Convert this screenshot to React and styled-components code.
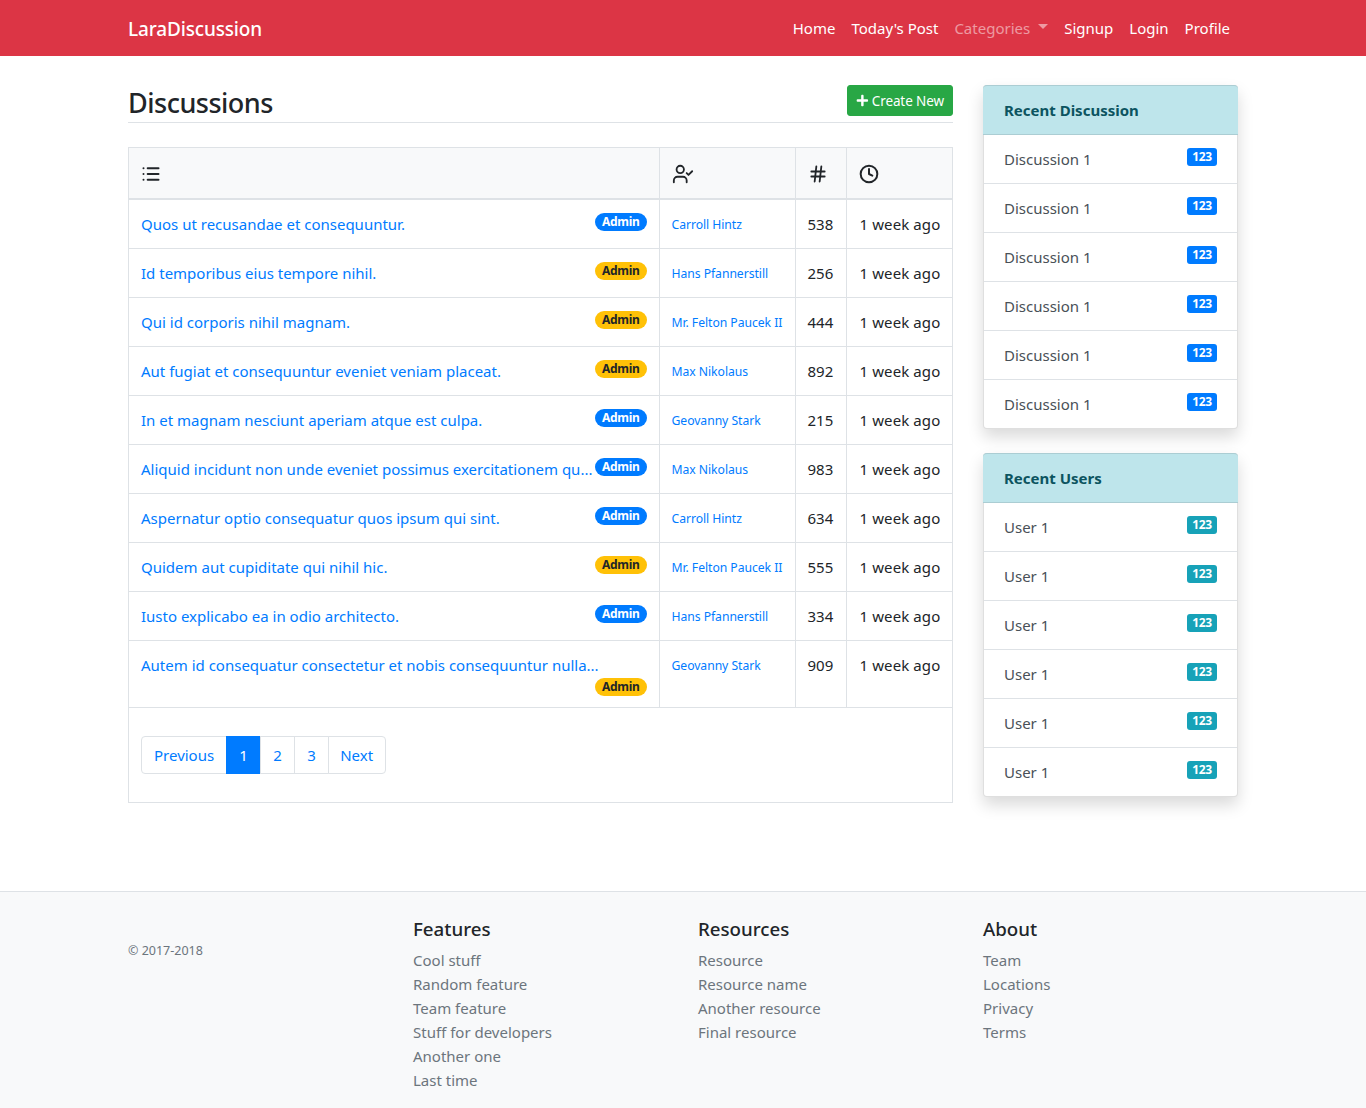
import React from "react";
import styled, { createGlobalStyle } from "styled-components";
import { List, UserCheck, Hash, Clock } from "lucide-react";
import { FaPlus } from "react-icons/fa";

const Global = createGlobalStyle`
  * { box-sizing: border-box; }
  html, body { margin: 0; padding: 0; background: #fff; }
  body { font-family: "Noto Sans", "Open Sans", sans-serif; font-size: 15px; line-height: 24px; color: #212529; }
  a { text-decoration: none; color: #007bff; }
`;

const Nav = styled.nav`
  height: 56px; background: #dc3545;
`;
const Container = styled.div`
  width: 1140px; margin: 0 auto; padding: 0 15px;
`;
const NavInner = styled(Container)`
  height: 56px; display: flex; align-items: center; justify-content: space-between;
`;
const Brand = styled.a`
  color: #fff; font-size: 19px; font-weight: 500; line-height: 30px; letter-spacing: -0.15px; padding-top: 2px;
`;
const NavLinks = styled.div`
  display: flex;
`;
const NavLink = styled.a`
  padding: 8px; color: ${p => (p.$muted ? "rgba(255,255,255,.5)" : "#fff")};
  display: flex; align-items: center;
`;
const Caret = styled.span`
  display: inline-block; margin-left: 8px; width: 0; height: 0;
  border-top: 5px solid rgba(255,255,255,.5); border-left: 5px solid transparent; border-right: 5px solid transparent;
  margin-top: -3px;
`;
const Layout = styled(Container)`
  display: flex; gap: 30px; padding-top: 29px; padding-bottom: 88px; align-items: flex-start;
`;
const MainCol = styled.main`
  width: 825px; flex: none;
`;
const Side = styled.aside`
  width: 255px; flex: none; display: flex; flex-direction: column; gap: 24px;
`;
const PageHead = styled.div`
  height: 38px; border-bottom: 1px solid #dee2e6; display: flex; justify-content: space-between; align-items: flex-start; margin-bottom: 24px;
`;
const Title = styled.h2`
  margin: 0; font-size: 27px; line-height: 36px; font-weight: 500; color: #212529; letter-spacing: -0.5px;
`;
const CreateBtn = styled.a`
  display: flex; align-items: center; gap: 3px; height: 31px; width: 106px; padding: 0 8px; background: #28a745; color: #fff;
  font-size: 13.5px; letter-spacing: -0.1px; white-space: nowrap; border-radius: 3px; border: 1px solid #28a745;
`;
const Panel = styled.section`
  border: 1px solid #dee2e6;
`;
const Table = styled.table`
  width: 100%; border-collapse: collapse; table-layout: fixed;
`;
const Th = styled.th`
  height: 51px; padding: 2px 12px 0; background: #f8f9fa; text-align: left; border-left: 1px solid #dee2e6; border-bottom: 2px solid #dee2e6;
  width: ${p => p.$w || "auto"}; font-weight: 400; color: #212529;
  &:first-child { border-left: none; }
  svg { display: block; }
`;
const Td = styled.td`
  padding: 12px; vertical-align: top; border-left: 1px solid #dee2e6; border-bottom: 1px solid #dee2e6;
  line-height: 24px; white-space: ${p => (p.$nowrap ? "nowrap" : "normal")};
  letter-spacing: ${p => (p.$nowrap ? "0.1px" : "normal")};
  padding-left: ${p => (p.$nowrap ? "13px" : "12px")};
  &:first-child { border-left: none; }
`;
const TopicTitle = styled.a`
  white-space: nowrap;
`;
const RoleBadge = styled.span`
  float: right; height: 18px; padding: 0 7px; margin: 1px 0 -1px; border-radius: 10px; font-size: 12px; line-height: 18px; font-weight: 700; letter-spacing: -0.3px;
  background: ${p => (p.$tone === "warn" ? "#ffc107" : "#007bff")};
  color: ${p => (p.$tone === "warn" ? "#212529" : "#fff")};
`;
const Author = styled.a`
  font-size: 12.2px; letter-spacing: -0.05px; display: block; white-space: nowrap; height: 24px; line-height: 26px;
`;
const Pager = styled.div`
  display: flex; padding: 28px 12px;
`;
const PageItem = styled.a`
  height: 38px; min-width: ${p => p.$w}; text-align: center; padding: 0 12px; line-height: 36px; border: 1px solid #dee2e6; margin-left: -1px;
  background: ${p => (p.$active ? "#007bff" : "#fff")};
  color: ${p => (p.$active ? "#fff" : "#007bff")};
  border-color: ${p => (p.$active ? "#007bff" : "#dee2e6")};
  &:first-child { margin-left: 0; border-radius: 4px 0 0 4px; }
  &:last-child { border-radius: 0 4px 4px 0; padding-left: 11px; }
`;
const Card = styled.section`
  border-radius: 4px; box-shadow: 0 8px 16px rgba(0,0,0,.15); border: 1px solid rgba(0,0,0,.125); background: #fff;
`;
const CardHead = styled.div`
  height: 50px; margin: -1px -1px 0; padding: 0 21px; display: flex; align-items: center; background: #bee5eb; color: #0c5460;
  font-weight: 700; border: 1px solid #abcdd3; border-width: 1px 0 1px; border-radius: 4px 4px 0 0;
`;
const Item = styled.div`
  height: 49px; padding: 12px 20px; color: #495057; border-bottom: 1px solid #dee2e6; line-height: 24px;
  &:last-child { border-bottom: none; height: 48px; }
`;
const CountBadge = styled.span`
  float: right; width: 30px; height: 18px; margin-top: 1px; text-align: center; border-radius: 3px; font-size: 12px; line-height: 18px; font-weight: 700; color: #fff; letter-spacing: -0.3px;
  background: ${p => (p.$tone === "info" ? "#17a2b8" : "#007bff")};
`;
const Footer = styled.footer`
  height: 217px; background: #f8f9fa; border-top: 1px solid #dee2e6;
`;
const FooterGrid = styled(Container)`
  display: grid; grid-template-columns: repeat(4, 285px); width: 1140px; padding: 24px 15px 0;
`;
const Copy = styled.small`
  font-size: 12.5px; color: #6c757d; display: block; margin-top: 23px;
`;
const FootTitle = styled.h5`
  margin: 0 0 6px; font-size: 18.7px; line-height: 26px; font-weight: 500; color: #212529;
`;
const FootLink = styled.a`
  display: block; color: #6c757d; line-height: 24px;
`;

const topics = [
  ["Quos ut recusandae et consequuntur.", "p", "Carroll Hintz", 538],
  ["Id temporibus eius tempore nihil.", "warn", "Hans Pfannerstill", 256],
  ["Qui id corporis nihil magnam.", "warn", "Mr. Felton Paucek II", 444],
  ["Aut fugiat et consequuntur eveniet veniam placeat.", "warn", "Max Nikolaus", 892],
  ["In et magnam nesciunt aperiam atque est culpa.", "p", "Geovanny Stark", 215],
  ["Aliquid incidunt non unde eveniet possimus exercitationem qu...", "p", "Max Nikolaus", 983],
  ["Aspernatur optio consequatur quos ipsum qui sint.", "p", "Carroll Hintz", 634],
  ["Quidem aut cupiditate qui nihil hic.", "warn", "Mr. Felton Paucek II", 555],
  ["Iusto explicabo ea in odio architecto.", "p", "Hans Pfannerstill", 334],
  ["Autem id consequatur consectetur et nobis consequuntur nulla...", "warn", "Geovanny Stark", 909],
];
const footer = [
  ["Features", ["Cool stuff", "Random feature", "Team feature", "Stuff for developers", "Another one", "Last time"]],
  ["Resources", ["Resource", "Resource name", "Another resource", "Final resource"]],
  ["About", ["Team", "Locations", "Privacy", "Terms"]],
];
const six = [0, 1, 2, 3, 4, 5];

export default function App() {
  return (
    <>
      <Global />
      <Nav>
        <NavInner>
          <Brand href="#">LaraDiscussion</Brand>
          <NavLinks>
            <NavLink href="#">Home</NavLink>
            <NavLink href="#">Today's Post</NavLink>
            <NavLink href="#" $muted>Categories<Caret /></NavLink>
            <NavLink href="#">Signup</NavLink>
            <NavLink href="#">Login</NavLink>
            <NavLink href="#">Profile</NavLink>
          </NavLinks>
        </NavInner>
      </Nav>
      <Layout>
        <MainCol>
          <PageHead>
            <Title>Discussions</Title>
            <CreateBtn href="#"><FaPlus size={13} />Create New</CreateBtn>
          </PageHead>
          <Panel>
            <Table>
              <thead>
                <tr>
                  <Th><List size={20} strokeWidth={2.4} /></Th>
                  <Th $w="136px"><UserCheck size={22} strokeWidth={2} /></Th>
                  <Th $w="51px"><Hash size={20} strokeWidth={2.2} /></Th>
                  <Th $w="106px"><Clock size={20} strokeWidth={2.4} /></Th>
                </tr>
              </thead>
              <tbody>
                {topics.map(([t, tone, a, n]) => (
                  <tr key={t}>
                    <Td>
                      <TopicTitle href="#">{t}</TopicTitle>
                      <RoleBadge $tone={tone}>Admin</RoleBadge>
                    </Td>
                    <Td><Author href="#">{a}</Author></Td>
                    <Td>{n}</Td>
                    <Td $nowrap>1 week ago</Td>
                  </tr>
                ))}
              </tbody>
            </Table>
            <Pager>
              <PageItem href="#">Previous</PageItem>
              <PageItem href="#" $active $w="35px">1</PageItem>
              <PageItem href="#" $w="35px">2</PageItem>
              <PageItem href="#" $w="35px">3</PageItem>
              <PageItem href="#">Next</PageItem>
            </Pager>
          </Panel>
        </MainCol>
        <Side>
          <Card>
            <CardHead>Recent Discussion</CardHead>
            {six.map(i => <Item key={i}><CountBadge>123</CountBadge>Discussion 1</Item>)}
          </Card>
          <Card>
            <CardHead>Recent Users</CardHead>
            {six.map(i => <Item key={i}><CountBadge $tone="info">123</CountBadge>User 1</Item>)}
          </Card>
        </Side>
      </Layout>
      <Footer>
        <FooterGrid>
          <Copy>© 2017-2018</Copy>
          {footer.map(([h, links]) => (
            <div key={h}>
              <FootTitle>{h}</FootTitle>
              {links.map(l => <FootLink href="#" key={l}>{l}</FootLink>)}
            </div>
          ))}
        </FooterGrid>
      </Footer>
    </>
  );
}
